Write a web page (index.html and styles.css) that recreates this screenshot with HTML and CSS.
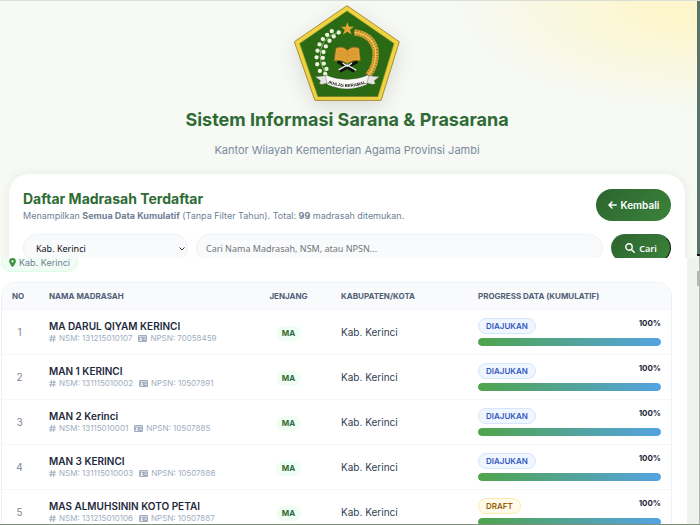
FILE: index.html
```html
<!DOCTYPE html>
<html lang="id">

<head>
    <meta charset="UTF-8">
    <meta name="viewport" content="width=device-width, initial-scale=1.0">
    <title>Daftar Madrasah Terdaftar</title>
    <link rel="stylesheet" href="styles.css">
</head>

<body>
    <!-- Icons -->
    <svg class="sprite" aria-hidden="true">
        <symbol id="i-hash" viewBox="0 0 14 14">
            <path d="M5 1 3.5 13M10.5 1 9 13M1.5 4.500h11.500M1 9.500h11.500" fill="none" stroke="currentColor" stroke-width="2" stroke-linecap="round" />
        </symbol>
        <symbol id="i-card" viewBox="0 0 18 14">
            <path fill="currentColor" fill-rule="evenodd" d="M2 0h14a2 2 0 0 1 2 2v10a2 2 0 0 1-2 2H2a2 2 0 0 1-2-2V2a2 2 0 0 1 2-2zM1.500 2.500v1h15v-1zM5.500 5a1.700 1.700 0 1 0 0 3.400 1.700 1.700 0 0 0 0-3.400zM2.500 11.500h6c0-1.500-1-2.300-2-2.300h-2c-1 0-2 .8-2 2.300zM11 5.500v1.200h5V5.500zM11 8.500v1.200h5V8.500z" />
        </symbol>
        <symbol id="i-pin" viewBox="0 0 12 16">
            <path fill="currentColor" fill-rule="evenodd" d="M6 0a6 6 0 0 1 6 6c0 2.700-3.600 7.500-5.300 9.600a.9.900 0 0 1-1.400 0C3.600 13.500 0 8.700 0 6a6 6 0 0 1 6-6zm0 4a2 2 0 1 0 0 4 2 2 0 0 0 0-4z" />
        </symbol>
    </svg>

    <div class="screen">
        <div class="page">
            <header class="hero">
                <svg class="emblem" viewBox="38 8 324 296" role="img" aria-label="Ikhlas Beramal">
                    <path d="M200 13 358 122 303 299H103L41 122z" fill="#efd342" stroke="#a98b35" stroke-width="3" />
                    <path d="M200 29 342 127 293 288H112L57 127z" fill="#2b6a14" stroke="#8c8b24" stroke-width="2" />
                    <path d="M201 63l5 14h15l-12 9 5 14-13-8-13 8 5-14-12-9h15z" fill="#e0a62f" />
                    <!-- cotton -->
                    <path d="M178 94Q132 100 121 145 113 190 141 223" fill="none" stroke="#8ab46c" stroke-width="3" />
                    <path class="cotton" d="M154 90h.1M175 94h.1M140 101h.1M160 106h.1M127 114h.1M147 119h.1M117 130h.1M136 136h.1M111 149h.1M129 153h.1M108 169h.1M127 171h.1M110 190h.1M130 188h.1M118 210h.1M138 204h.1M134 219h.1" />
                    <!-- rice -->
                    <path d="M222 94Q274 99 286 146 291 190 264 224" fill="none" stroke="#d9a536" stroke-width="19" />
                    <path d="M222 94Q274 99 286 146 291 190 264 224" fill="none" stroke="#8f731f" stroke-width="19" stroke-dasharray="2 6" />
                    <path d="M222 94Q274 99 286 146 291 190 264 224" fill="none" stroke="#f0c354" stroke-width="4" />
                    <!-- book on its stand -->
                    <path d="M172 182 222 211M231 182 178 211" stroke="#111" stroke-width="10" />
                    <path d="M175 207 201 192 228 208M187 186l14 10 14-10" fill="none" stroke="#f5f5f0" stroke-width="4" />
                    <path d="M161 180l5-38q20-10 35 6 15-16 36-6l4 38q-22-6-40 9-17-15-40-9z" fill="#e2a133" stroke="#80601d" stroke-width="2" />
                    <path d="M201 148v40M171 151q15-5 26 4M171 160q15-5 26 4M170 169q15-4 26 4M231 151q-15-5-26 4M231 160q-15-5-26 4M232 169q-15-4-26 4" fill="none" stroke="#ad7525" stroke-width="1" />
                    <!-- ribbon -->
                    <path d="M104 228l38-4 6 22-25 5-7-3 4-8zM298 228l-38-4-6 22 25 5 7-3-4-8z" fill="#e4e5df" stroke="#444" stroke-width="1" />
                    <path d="M134 222q66 28 132 0l-7 30q-59 25-118 0z" fill="#fafaf5" stroke="#333" stroke-width="1" />
                    <path id="motto" d="M138 246q62 25 124 0" fill="none" />
                    <text class="motto"><textPath href="#motto" startOffset="50%">IKHLAS BERAMAL</textPath></text>
                </svg>
                <h1>Sistem Informasi Sarana &amp; Prasarana</h1>
                <p>Kantor Wilayah Kementerian Agama Provinsi Jambi</p>
            </header>

            <section class="card">
                <div class="card-head">
                    <div>
                        <h2>Daftar Madrasah Terdaftar</h2>
                        <p>Menampilkan <b>Semua Data Kumulatif</b> (Tanpa Filter Tahun). Total: <b>99</b> madrasah ditemukan.</p>
                    </div>
                    <a class="btn btn-back" href="#">
                        <svg width="9" height="8" viewBox="0 0 9 8" fill="none" stroke="currentColor" stroke-width="1.500" stroke-linecap="round" stroke-linejoin="round">
                            <path d="M8.200 4H1M4 1 1 4l3 3" />
                        </svg>
                        Kembali
                    </a>
                </div>
                <form class="filters">
                    <div class="select-box">
                        <select aria-label="Kabupaten/Kota">
                            <option>Kab. Kerinci</option>
                        </select>
                        <svg width="6" height="4" viewBox="0 0 6 4" fill="none" stroke="#333" stroke-width="1">
                            <path d="M.5.500 3 3 5.500.500" />
                        </svg>
                    </div>
                    <input type="text" aria-label="Cari madrasah" placeholder="Cari Nama Madrasah, NSM, atau NPSN...">
                    <button class="btn btn-search" type="button">
                        <svg width="10" height="10" viewBox="0 0 10 10" fill="none" stroke="currentColor" stroke-width="1.400" stroke-linecap="round">
                            <circle cx="4" cy="4" r="3.200" />
                            <path d="M6.400 6.400 9.200 9.200" />
                        </svg>
                        Cari
                    </button>
                </form>
            </section>

            <main class="results">
                <div class="results-body">
                    <span class="chip"><svg width="7" height="9"><use href="#i-pin" /></svg>Kab. Kerinci</span>

                    <div class="table-box">
                        <table>
                            <thead>
                                <tr>
                                    <th class="col-no">No</th>
                                    <th class="col-name">Nama Madrasah</th>
                                    <th class="col-level">Jenjang</th>
                                    <th class="col-city">Kabupaten/Kota</th>
                                    <th>Progress Data (Kumulatif)</th>
                                </tr>
                            </thead>
                            <tbody>
                                <tr>
                                    <td class="no">1</td>
                                    <td>
                                        <div class="name">MA DARUL QIYAM KERINCI</div>
                                        <div class="meta">
                                            <span><svg width="7" height="7"><use href="#i-hash" /></svg>NSM: 131215010107</span>
                                            <span><svg width="9" height="7"><use href="#i-card" /></svg>NPSN: 70058459</span>
                                        </div>
                                    </td>
                                    <td class="level"><span>MA</span></td>
                                    <td class="city">Kab. Kerinci</td>
                                    <td>
                                        <div class="progress-top"><span class="status">DIAJUKAN</span><b>100%</b></div>
                                        <div class="bar"><div style="width: 100%"></div></div>
                                    </td>
                                </tr>
                                <tr>
                                    <td class="no">2</td>
                                    <td>
                                        <div class="name">MAN 1 KERINCI</div>
                                        <div class="meta">
                                            <span><svg width="7" height="7"><use href="#i-hash" /></svg>NSM: 131115010002</span>
                                            <span><svg width="9" height="7"><use href="#i-card" /></svg>NPSN: 10507891</span>
                                        </div>
                                    </td>
                                    <td class="level"><span>MA</span></td>
                                    <td class="city">Kab. Kerinci</td>
                                    <td>
                                        <div class="progress-top"><span class="status">DIAJUKAN</span><b>100%</b></div>
                                        <div class="bar"><div style="width: 100%"></div></div>
                                    </td>
                                </tr>
                                <tr>
                                    <td class="no">3</td>
                                    <td>
                                        <div class="name">MAN 2 Kerinci</div>
                                        <div class="meta">
                                            <span><svg width="7" height="7"><use href="#i-hash" /></svg>NSM: 13115010001</span>
                                            <span><svg width="9" height="7"><use href="#i-card" /></svg>NPSN: 10507885</span>
                                        </div>
                                    </td>
                                    <td class="level"><span>MA</span></td>
                                    <td class="city">Kab. Kerinci</td>
                                    <td>
                                        <div class="progress-top"><span class="status">DIAJUKAN</span><b>100%</b></div>
                                        <div class="bar"><div style="width: 100%"></div></div>
                                    </td>
                                </tr>
                                <tr>
                                    <td class="no">4</td>
                                    <td>
                                        <div class="name">MAN 3 KERINCI</div>
                                        <div class="meta">
                                            <span><svg width="7" height="7"><use href="#i-hash" /></svg>NSM: 131115010003</span>
                                            <span><svg width="9" height="7"><use href="#i-card" /></svg>NPSN: 10507886</span>
                                        </div>
                                    </td>
                                    <td class="level"><span>MA</span></td>
                                    <td class="city">Kab. Kerinci</td>
                                    <td>
                                        <div class="progress-top"><span class="status">DIAJUKAN</span><b>100%</b></div>
                                        <div class="bar"><div style="width: 100%"></div></div>
                                    </td>
                                </tr>
                                <tr>
                                    <td class="no">5</td>
                                    <td>
                                        <div class="name">MAS ALMUHSININ KOTO PETAI</div>
                                        <div class="meta">
                                            <span><svg width="7" height="7"><use href="#i-hash" /></svg>NSM: 131215010106</span>
                                            <span><svg width="9" height="7"><use href="#i-card" /></svg>NPSN: 10507887</span>
                                        </div>
                                    </td>
                                    <td class="level"><span>MA</span></td>
                                    <td class="city">Kab. Kerinci</td>
                                    <td>
                                        <div class="progress-top"><span class="status draft">DRAFT</span><b>100%</b></div>
                                        <div class="bar"><div style="width: 100%"></div></div>
                                    </td>
                                </tr>
                            </tbody>
                        </table>
                    </div>
                </div>
            </main>
        </div>

        <div class="rail">
            <div class="rail-top"></div>
            <div class="rail-thumb"></div>
        </div>
    </div>
</body>

</html>
```

FILE: styles.css
```css
* {
    box-sizing: border-box;
}

body {
    margin: 0;
    font-family: Inter, "Liberation Sans", sans-serif;
    color: #1e293b;
    background: #f6f9f4;
}

h1,
h2,
p {
    margin: 0;
}

.sprite {
    display: none;
}

.screen {
    display: flex;
    height: 100vh;
    overflow: hidden;
    border-top: 1px solid #dcdfd6;
    border-bottom: 1px solid #7f8f7a;
}

.page {
    flex: 1;
    min-width: 0;
    display: flex;
    flex-direction: column;
    background: radial-gradient(ellipse 240px 110px at 100% 0, #fdf6cc 20%, rgba(253, 246, 204, 0)), #f6f9f4;
}

/* Header */
.hero {
    display: flex;
    flex-direction: column;
    align-items: center;
    flex-shrink: 0;
    padding: 3px 3px 15px 0;
}

.emblem {
    width: 108px;
    height: 98px;
    filter: drop-shadow(0 6px 10px rgba(0, 0, 0, 0.12));
}

.cotton {
    fill: none;
    stroke: #eef3df;
    stroke-width: 13;
    stroke-linecap: round;
}

.motto {
    font: bold 13px "Liberation Sans", sans-serif;
    text-anchor: middle;
    fill: #111;
}

.hero h1 {
    margin-top: 6px;
    font-size: 18px;
    line-height: 24px;
    font-weight: 700;
    color: #2f6b35;
}

.hero p {
    margin-top: 9px;
    font-size: 11px;
    line-height: 18px;
    color: #7b8a9f;
}

/* Filter card */
.card {
    flex-shrink: 0;
    margin: 0 12px 0 9px;
    padding: 15px 14px 0;
    border-radius: 20px 20px 0 0;
    background: #fff;
    box-shadow: 0 0 10px rgba(40, 70, 40, 0.08);
}

.card-head {
    display: flex;
    justify-content: space-between;
    align-items: flex-start;
}

.card h2 {
    font-size: 14px;
    line-height: 20px;
    color: #2f6b35;
}

.card p {
    font-size: 9px;
    line-height: 14px;
    color: #718096;
}

.btn {
    display: flex;
    align-items: center;
    justify-content: center;
    gap: 4px;
    border: 0;
    border-radius: 16px;
    background: linear-gradient(135deg, #2c642e, #3c833b);
    color: #fff;
    font-size: 10px;
    font-weight: 600;
    text-decoration: none;
}

.btn-back {
    width: 75px;
    height: 32px;
}

.filters {
    display: flex;
    gap: 8px;
    margin-top: 11px;
}

.filters select,
.filters input,
.btn.btn-search {
    height: 28px;
    font-family: "Noto Sans", sans-serif;
    font-size: 9px;
}

.filters select,
.filters input {
    width: 100%;
    border: 1px solid #eef1f5;
    border-radius: 14px;
    background: #f8fafc;
    outline: 0;
}

.filters select {
    appearance: none;
    padding: 0 12px;
    color: #111;
}

.filters input {
    flex: 1;
    padding: 0 9px;
}

.filters input::placeholder {
    color: #757575;
}

.select-box {
    position: relative;
    width: 165px;
}

.select-box svg {
    position: absolute;
    top: 13px;
    right: 3px;
}

.btn.btn-search {
    width: 60px;
    border: 1px outset #396c3c;
}

.results {
    position: relative;
    flex: 1;
    min-height: 0;
    margin-top: -4px;
    padding-right: 10px;
    overflow: hidden;
    background: #f0f3ed;
}

.results-body {
    display: flow-root;
    height: 100%;
    padding: 0 15px 0 1px;
    background: #fff;
}

.chip {
    display: flex;
    align-items: center;
    gap: 3px;
    width: max-content;
    height: 20px;
    margin-top: -6px;
    padding: 0 7px;
    border: 1px solid #dcfce7;
    border-radius: 10px;
    background: #f0fdf4;
    color: #718096;
    font-size: 9px;
}

.chip svg {
    color: #3f9142;
}

.table-box {
    margin-top: 10px;
    border: 1px solid #edf1f6;
    border-radius: 14px;
    overflow: hidden;
}

table {
    width: 100%;
    border-collapse: collapse;
    table-layout: fixed;
}

th {
    height: 26px;
    padding: 0 10px 0 12px;
    background: #f8fafc;
    color: #526077;
    font-size: 8px;
    font-weight: 700;
    text-align: left;
    text-transform: uppercase;
    white-space: nowrap;
}

td {
    height: 45px;
    padding: 0 10px 0 12px;
    border-top: 1px solid #f4f6f9;
}

.col-no {
    width: 35px;
    padding: 0 0 0 10px;
}

.col-name {
    width: 211px;
}

.col-level {
    width: 81px;
}

.col-city {
    width: 137px;
}

th.col-level,
td.level,
td.no {
    padding: 0;
    text-align: center;
}

td.no {
    color: #7b8798;
    font-size: 10px;
}

.name {
    font-size: 10px;
    line-height: 14px;
    font-weight: 600;
}

.meta {
    display: flex;
    gap: 6px;
    color: #a0aec0;
    font-size: 8px;
    line-height: 11px;
    white-space: nowrap;
}

.meta span {
    display: flex;
    align-items: center;
    gap: 3px;
}

.level span {
    display: inline-block;
    padding: 0 6px;
    border-radius: 8px;
    background: #f0fdf4;
    color: #2f6b35;
    font-size: 8px;
    line-height: 15px;
    font-weight: 700;
    vertical-align: middle;
}

td.city {
    color: #334155;
    font-size: 10px;
}

.progress-top {
    display: flex;
    justify-content: space-between;
    align-items: flex-start;
    margin-bottom: 4px;
}

.progress-top b {
    font-size: 8px;
    line-height: 10px;
}

.status {
    padding: 0 7px;
    border: 1px solid #d3e6fb;
    border-radius: 8px;
    background: #eff6ff;
    color: #3457c0;
    font-size: 8px;
    line-height: 14px;
    font-weight: 600;
}

.status.draft {
    border-color: #fbeab0;
    background: #fffbe8;
    color: #92600f;
}

.bar {
    height: 8px;
    border-radius: 4px;
    background: #edf2f7;
    overflow: hidden;
}

.bar div {
    height: 100%;
    border-radius: 4px;
    background: linear-gradient(90deg, #50a44c, #54a3e3);
}

/* Strip along the right edge of the window */
.rail {
    width: 3px;
    background: #f0f3ed;
    border-right: 1px solid #aeb5b0;
}

.rail-top {
    height: 255px;
    margin-right: -1px;
    background: #57756b;
    border-bottom: 2px solid #111;
}

.rail-thumb {
    height: 15px;
    margin-top: 15px;
    background: #b4b7b4;
}
```
